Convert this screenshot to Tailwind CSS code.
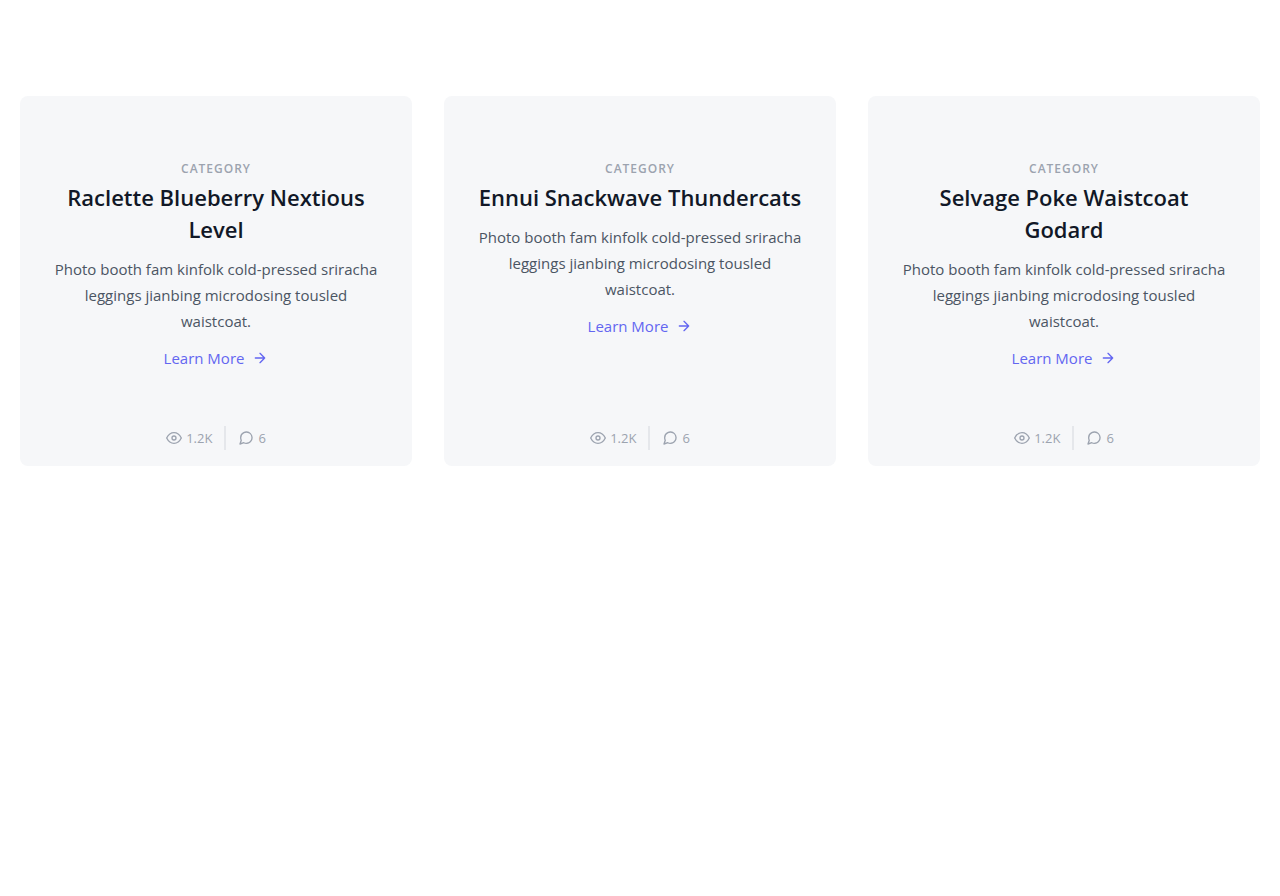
<!DOCTYPE html>
<html lang="en">
<head>
<meta charset="utf-8">
<meta name="viewport" content="width=device-width, initial-scale=1">
<title>Blog</title>
<script src="https://cdn.jsdelivr.net/npm/@tailwindcss/browser@4"></script>
</head>
<body class="bg-white font-['Open_Sans',sans-serif] text-[#4b5563]">
<section class="mx-auto max-w-7xl px-5 py-24">
  <div class="grid grid-cols-1 gap-8 md:grid-cols-3" id="cards"></div>
</section>
<template id="card">
  <article class="flex flex-col rounded-lg bg-[#f6f7f9] px-8 pt-[65px] pb-4 text-center">
    <p class="mb-1 text-xs font-semibold leading-4 tracking-[1px] text-[#9ca3af]">CATEGORY</p>
    <h2 class="mb-[11px] text-[22px] font-semibold leading-8 text-[#111827]"></h2>
    <p class="mb-3 text-[15px] leading-[26px]">Photo booth fam kinfolk cold-pressed sriracha leggings jianbing microdosing tousled waistcoat.</p>
    <div><a href="#" class="inline-flex items-center text-[15px] leading-6 text-[#6366f1]">Learn More
      <svg class="ml-2 size-4" viewBox="0 0 24 24" stroke="currentColor" stroke-width="2" fill="none" stroke-linecap="round" stroke-linejoin="round"><path d="M5 12h14M12 5l7 7-7 7"/></svg></a></div>
    <div class="mt-auto flex items-center justify-center pt-14 text-[13px] leading-6 text-[#9ca3af]">
      <span class="mr-3 inline-flex items-center border-r-2 border-[#e5e7eb] pr-3"><svg class="mr-1 size-4" viewBox="0 0 24 24" stroke="currentColor" stroke-width="2" fill="none" stroke-linecap="round" stroke-linejoin="round"><path d="M1 12s4-8 11-8 11 8 11 8-4 8-11 8-11-8-11-8z"/><circle cx="12" cy="12" r="3"/></svg>1.2K</span>
      <span class="inline-flex items-center"><svg class="mr-1 size-4" viewBox="0 0 24 24" stroke="currentColor" stroke-width="2" fill="none" stroke-linecap="round" stroke-linejoin="round"><path d="M21 11.5a8.38 8.38 0 01-.9 3.8 8.5 8.5 0 01-7.6 4.7 8.38 8.38 0 01-3.8-.9L3 21l1.9-5.7a8.38 8.38 0 01-.9-3.8 8.5 8.5 0 014.7-7.6 8.38 8.38 0 013.8-.9h.5a8.48 8.48 0 018 8v.5z"/></svg>6</span>
    </div>
  </article>
</template>
<script>
for (const title of ["Raclette Blueberry Nextious Level", "Ennui Snackwave Thundercats", "Selvage Poke Waistcoat Godard"]) {
  const card = document.getElementById("card").content.cloneNode(true);
  card.querySelector("h2").textContent = title;
  document.getElementById("cards").append(card);
}
</script>
</body>
</html>
